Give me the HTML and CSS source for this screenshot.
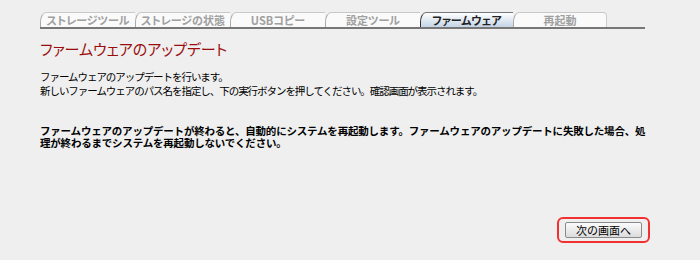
FILE: index.html
```html
<!DOCTYPE html>
<html lang="ja">
<head>
<meta charset="utf-8">
<title>ファームウェアのアップデート</title>
<link rel="stylesheet" href="styles.css">
</head>
<body>
<div class="page">
  <nav class="tabs">
    <a class="tab">ストレージツール</a>
    <a class="tab">ストレージの状態</a>
    <a class="tab">USBコピー</a>
    <a class="tab">設定ツール</a>
    <a class="tab tab-active">ファームウェア</a>
    <a class="tab tab-last">再起動</a>
  </nav>
  <h1 class="title">ファームウェアのアップデート</h1>
  <p class="intro">ファームウェアのアップデートを行います。<br>新しいファームウェアのパス名を指定し、下の実行ボタンを押してください。確認画面が表示されます。</p>
  <p class="warn">ファームウェアのアップデートが終わると、自動的にシステムを再起動します。ファームウェアのアップデートに失敗した場合、処理が終わるまでシステムを再起動しないでください。</p>
  <div class="actions">
    <span class="highlight"><button class="btn" type="button">次の画面へ</button></span>
  </div>
</div>
</body>
</html>
```

FILE: styles.css
```css
html, body {
  margin: 0;
  padding: 0;
  background: #efefef;
}
body {
  font-family: "Noto Sans CJK JP", "Liberation Sans", sans-serif;
  color: #000;
}
.page {
  width: 610px;
  margin-left: 40px;
  padding-top: 12px;
}
.tabs {
  display: flex;
  width: 605px;
  height: 15px;
  border-bottom: 2px solid #777;
  font-feature-settings: "palt" 1;
}
.tab {
  box-sizing: border-box;
  flex: 0 0 95px;
  height: 15px;
  background: #fafafa;
  border-top: 1px solid #c8c8c8;
  border-left: 1px solid #aaa;
  border-top-left-radius: 6px 10px;
  color: #a0a0a0;
  font-size: 11px;
  font-weight: bold;
  line-height: 14px;
  text-align: center;
  white-space: nowrap;
}
.tab-active {
  flex-basis: 93px;
  background: linear-gradient(#ffffff, #c3d4e6);
  border-left: 1px solid #333;
  border-top: 1px solid #777;
  color: #222;
}
.tab-last {
  flex-basis: 94px;
  border-right: 1px solid #ccc;
  border-top-right-radius: 4px;
}
.title {
  margin: 10px 0 0;
  font-size: 15px;
  line-height: 20px;
  font-weight: normal;
  color: #9b0d0d;
  font-feature-settings: "palt" 1;
}
.intro {
  margin: 11px 0 0;
  font-size: 10.5px;
  letter-spacing: -1.05px;
  line-height: 14px;
}
.warn {
  width: 610px;
  margin: 27px 0 0;
  font-size: 10.5px;
  letter-spacing: -0.2px;
  line-height: 12px;
  font-weight: bold;
}
.actions {
  display: flex;
  justify-content: flex-end;
  margin-top: 68px;
}
.highlight {
  display: block;
  border: 2px solid #f23030;
  border-radius: 6px;
  padding: 3px 6px;
}
.btn {
  display: block;
  box-sizing: border-box;
  width: 77px;
  height: 16px;
  padding: 0;
  border: 1px solid #8a8a8a;
  border-radius: 2px;
  background: linear-gradient(#fbfbfb, #dcdcdc);
  font-family: inherit;
  font-size: 11px;
  line-height: 14px;
  color: #000;
}
```
